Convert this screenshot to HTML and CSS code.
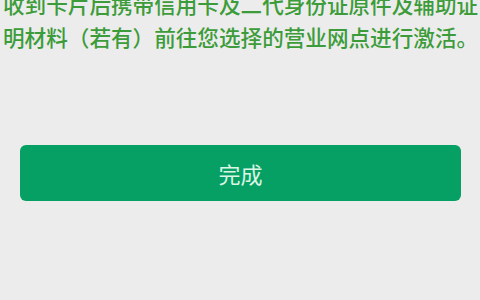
FILE: index.html
```html
<!DOCTYPE html>
<html lang="zh">
<head>
<meta charset="utf-8">
<link rel="stylesheet" href="styles.css">
</head>
<body>
<div class="page">
  <p class="notice">收到卡片后携带信用卡及二代身份证原件及辅助证明材料（若有）前往您选择的营业网点进行激活。</p>
  <button class="done">完成</button>
</div>
</body>
</html>
```
FILE: styles.css
```css
html, body {
  margin: 0;
  padding: 0;
  background: #ececec;
  overflow: hidden;
}
.page {
  width: 480px;
  height: 300px;
  display: flex;
  flex-direction: column;
  font-family: "Noto Sans CJK SC", "Noto Sans", sans-serif;
}
.notice {
  margin: -13px 0 0 3px;
  width: 477px;
  font-size: 21.6px;
  font-weight: 500;
  line-height: 33px;
  color: #3c9c3a;
  word-break: break-all;
}
.done {
  margin: 92px 0 0 20px;
  width: 441px;
  height: 56px;
  border: none;
  border-radius: 6px;
  background: #07a064;
  color: #dcf6e6;
  font-family: "Noto Sans CJK SC", "Noto Sans", sans-serif;
  font-size: 22px;
  padding: 0;
}
```
